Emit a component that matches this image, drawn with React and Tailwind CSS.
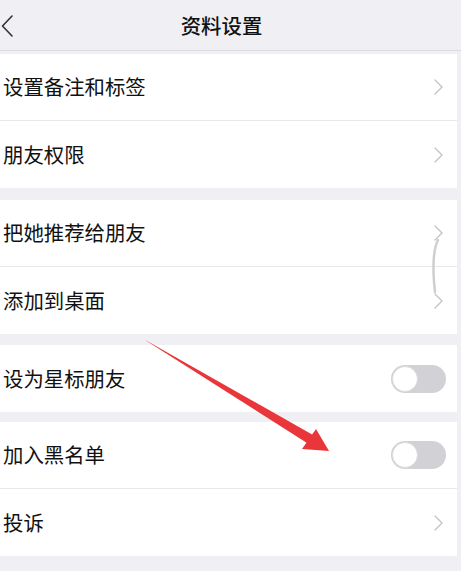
import React from 'react'

const font = { fontFamily: '"Noto Sans CJK SC", "Noto Sans", sans-serif' }

const Chevron = () => (
  <svg width="12" height="18" viewBox="0 0 12 18" className="shrink-0">
    <path d="M2 2l7 7-7 7" fill="none" stroke="#c4c4c8" strokeWidth="1.4" strokeLinecap="round" strokeLinejoin="round" />
  </svg>
)

const Toggle = () => (
  <div className="relative h-[28px] w-[55px] shrink-0 rounded-full bg-[#d1d1d6]">
    <div className="absolute left-[1px] top-[1px] h-[26px] w-[26px] rounded-full border border-[#dcdcdc] bg-white" />
  </div>
)

const Row = ({ label, toggle, border }) => (
  <div className={`flex h-[67px] items-center justify-between bg-white pl-[3px] pr-[12px] ${border ? 'border-b border-[#e8e8ea]' : ''}`}>
    <span className="pb-[1px] text-[20.4px] leading-none text-[#111]">{label}</span>
    {toggle ? <div className="-mr-[1px]"><Toggle /></div> : <Chevron />}
  </div>
)

export default function App() {
  return (
    <div className="relative h-[571px] w-[461px] overflow-hidden bg-[#efeff4]" style={font}>
      {/* header */}
      <div className="relative flex h-[51px] items-center justify-center border-b border-[#dcdce0] bg-[#efeff4] pr-[18px]">
        <svg width="16" height="24" viewBox="0 0 16 24" className="absolute left-0 top-[14px]">
          <path d="M12 2L2.5 12 12 22" fill="none" stroke="#333" strokeWidth="1.6" strokeLinejoin="round" strokeLinecap="round" />
        </svg>
        <span className="text-[20.4px] font-medium text-[#111]">资料设置</span>
      </div>

      <div className="mt-[3px] pr-[4px]">
        <Row label="设置备注和标签" border />
        <Row label="朋友权限" />

        <div className="h-[12px]" />
        <Row label="把她推荐给朋友" border />
        <Row label="添加到桌面" />

        <div className="h-[11px]" />
        <Row label="设为星标朋友" toggle />

        <div className="h-[10px]" />
        <Row label="加入黑名单" toggle border />
        <Row label="投诉" />
      </div>

      {/* overlay: scroll hint and red arrow */}
      <svg width="461" height="571" viewBox="0 0 461 571" className="pointer-events-none absolute left-0 top-0">
        <path d="M438 240 C433 250 432 265 435 292" fill="none" stroke="#cfcfcf" strokeWidth="2.5" strokeLinecap="round" />
        <polygon points="145,340 147,341 313,435 307,443" fill="#e8363a" />
        <polygon points="302,449 329,451 316,429" fill="#e8363a" />
      </svg>
    </div>
  )
}
